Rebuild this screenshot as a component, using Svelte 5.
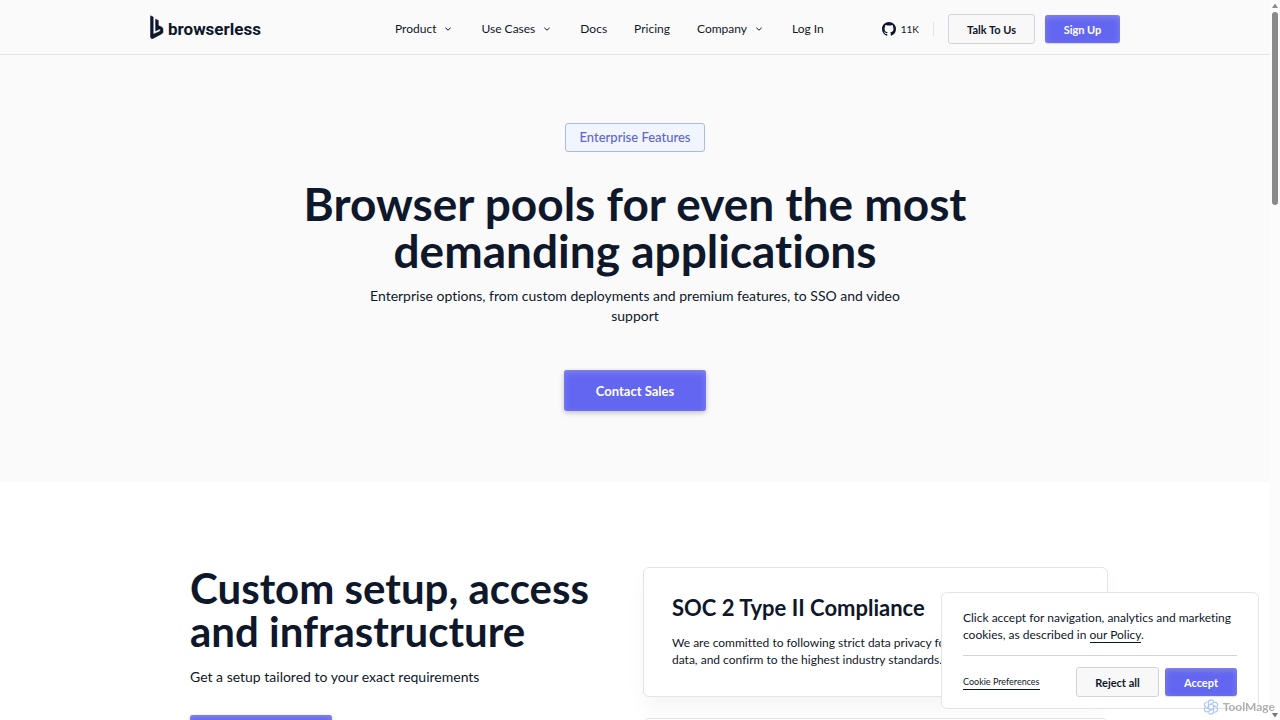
<script>
  const navItems = [
    { label: 'Product', menu: true },
    { label: 'Use Cases', menu: true },
    { label: 'Docs' },
    { label: 'Pricing' },
    { label: 'Company', menu: true },
    { label: 'Log In' }
  ];

  let showCookies = $state(true);
</script>

<div class="window">
  <div class="page">
    <header>
      <div class="bar">
        <a class="logo" href="/" aria-label="browserless home">
          <svg width="14" height="25" viewBox="0 0 14 25" aria-hidden="true">
            <path d="M0.5 0.8 L3.2 2 V19.3 L10.2 16.2 V13.8 L5.6 15.9 V4.2 L8.3 5.4 V10.6 L11.7 12.1 Q13 12.8 13 14.2 V17 Q13 18.2 11.9 18.7 L3 23.4 Q1.6 24 0.9 23 Q0.5 22.4 0.5 21.5 Z" fill="#0f172a" stroke="#0f172a" stroke-width="0.5" stroke-linejoin="round" />
          </svg>
          <span>browserless</span>
        </a>

        <nav>
          {#each navItems as item}
            {#if item.menu}
              <button class="nav-item">
                {item.label}
                <svg width="12" height="12" viewBox="0 0 12 12" aria-hidden="true">
                  <path d="M3.6 5 L6 7.2 L8.4 5" fill="none" stroke="#0f172a" stroke-width="1" stroke-linecap="round" />
                </svg>
              </button>
            {:else}
              <a class="nav-item" href="/{item.label.toLowerCase()}">{item.label}</a>
            {/if}
          {/each}
        </nav>

        <div class="actions">
          <a class="github" href="/github">
            <svg width="14" height="14" viewBox="0 0 16 16" aria-hidden="true">
              <path fill="#0f172a" d="M8 0C3.58 0 0 3.58 0 8c0 3.54 2.29 6.53 5.47 7.59.4.07.55-.17.55-.38 0-.19-.01-.82-.01-1.49-2.01.37-2.53-.49-2.69-.94-.09-.23-.48-.94-.82-1.13-.28-.15-.68-.52-.01-.53.63-.01 1.08.58 1.23.82.72 1.21 1.87.87 2.33.66.07-.52.28-.87.51-1.07-1.78-.2-3.64-.89-3.64-3.95 0-.87.31-1.59.82-2.15-.08-.2-.36-1.02.08-2.12 0 0 .67-.21 2.2.82.64-.18 1.32-.27 2-.27s1.36.09 2 .27c1.53-1.04 2.2-.82 2.2-.82.44 1.1.16 1.92.08 2.12.51.56.82 1.27.82 2.15 0 3.07-1.87 3.75-3.65 3.95.29.25.54.73.54 1.48 0 1.07-.01 1.93-.01 2.2 0 .21.15.46.55.38A8.01 8.01 0 0 0 16 8c0-4.42-3.58-8-8-8z" />
            </svg>
            11K
          </a>
          <button class="btn outline talk">Talk To Us</button>
          <button class="btn primary signup">Sign Up</button>
        </div>
      </div>
    </header>

    <section class="hero">
      <span class="tag">Enterprise Features</span>
      <h1>Browser pools for even the most demanding applications</h1>
      <p>Enterprise options, from custom deployments and premium features, to SSO and video support</p>
      <button class="btn primary large">Contact Sales</button>
    </section>

    <section class="features">
      <div class="intro">
        <h2>Custom setup, access and infrastructure</h2>
        <p>Get a setup tailored to your exact requirements</p>
        <button class="btn primary large" aria-label="Contact Sales"></button>
      </div>
      <div class="cards">
        <article class="card">
          <h3>SOC 2 Type II Compliance</h3>
          <p>We are committed to following strict data privacy for your data, and confirm to the highest industry standards.</p>
        </article>
        <article class="card"></article>
      </div>
    </section>
  </div>

  <div class="scrollbar" aria-hidden="true">
    <svg width="6" height="5" viewBox="0 0 6 5"><path d="M3 0.5 L6 5 H0 Z" fill="#8b8b8b" /></svg>
    <div class="thumb"></div>
    <svg class="down" width="6" height="5" viewBox="0 0 6 5"><path d="M0 0 H6 L3 4.5 Z" fill="#777" /></svg>
  </div>

  {#if showCookies}
    <aside class="cookies">
      <p>Click accept for navigation, analytics and marketing cookies, as described in <a href="/policy">our Policy</a>.</p>
      <div class="choices">
        <a class="prefs" href="/preferences">Cookie Preferences</a>
        <button class="btn outline reject" onclick={() => (showCookies = false)}>Reject all</button>
        <button class="btn primary accept" onclick={() => (showCookies = false)}>Accept</button>
      </div>
    </aside>
  {/if}

  <div class="watermark">
    <svg width="16" height="16" viewBox="0 0 16 16" aria-hidden="true">
      <g fill="none" stroke="#a9c6f5" stroke-width="1.2">
        {#each [0, 60, 120, 180, 240, 300] as angle}
          <path d="M8 5 L5.4 6.5 V3.4 Q5.6 1 8 0.8 Q10 0.8 10.8 2.4" transform="rotate({angle} 8 8)" />
        {/each}
      </g>
    </svg>
    ToolMage
  </div>
</div>

<style>
  :global(body) {
    margin: 0;
    background: #fff;
  }

  .window {
    display: flex;
    height: 100vh;
    overflow: hidden;
    font-family: Lato, "Liberation Sans", sans-serif;
    font-variant-ligatures: no-common-ligatures;
    color: #0f172a;
  }

  .page {
    flex: 1;
    min-width: 0;
  }

  h1, h2, h3, p {
    margin: 0;
  }

  a {
    color: inherit;
    text-decoration: none;
  }

  button {
    font-family: inherit;
    color: inherit;
    cursor: pointer;
  }

  header {
    background: #fafafa;
    border-bottom: 1px solid #e4e4e7;
  }

  .bar {
    display: flex;
    align-items: center;
    max-width: 970px;
    height: 54px;
    padding-top: 4px;
    box-sizing: border-box;
    margin: 0 auto;
  }

  .logo {
    display: flex;
    align-items: center;
    gap: 4px;
    width: 245px;
    font: 700 17px/24px Roboto, sans-serif;
  }

  .logo svg {
    margin-bottom: 4px;
  }

  nav {
    display: flex;
    gap: 27px;
  }

  .nav-item {
    display: flex;
    align-items: center;
    gap: 6px;
    padding: 0;
    border: 0;
    background: none;
    font-size: 12px;
    line-height: 16px;
    white-space: nowrap;
  }

  .actions {
    display: flex;
    align-items: center;
    margin-left: auto;
  }

  .github {
    display: flex;
    align-items: center;
    gap: 5px;
    padding-right: 14px;
    margin-right: 14px;
    border-right: 1px solid #e4e4e7;
    font-size: 10px;
    line-height: 14px;
  }

  .btn {
    box-sizing: border-box;
    height: 28px;
    padding: 0;
    border: 0;
    border-radius: 3px;
    font-size: 11px;
    font-weight: 700;
    white-space: nowrap;
  }

  .primary {
    background: #6366f1;
    color: #fff;
    box-shadow: inset 0 2px 6px rgba(148, 150, 230, 0.7), 0 1px 1px rgba(30, 30, 90, 0.15);
  }

  .outline {
    height: 30px;
    background: #f8f8f9;
    border: 1px solid #d4d4d8;
  }

  .talk {
    width: 87px;
    margin-right: 10px;
  }

  .signup {
    width: 75px;
  }

  .large {
    width: 142px;
    height: 41px;
    font-size: 13px;
    box-shadow: inset 0 2px 6px rgba(148, 150, 230, 0.7), 0 2px 5px rgba(30, 30, 60, 0.25);
  }

  .hero {
    display: flex;
    flex-direction: column;
    align-items: center;
    padding: 68px 20px 71px;
    background: #fafafa;
    text-align: center;
  }

  .tag {
    padding: 5px 14px;
    border: 1px solid #a9bcdc;
    border-radius: 3px;
    background: #f0f5ff;
    color: #6366c8;
    font-size: 13px;
    font-weight: 500;
    line-height: 17px;
  }

  h1 {
    max-width: 700px;
    margin-top: 28px;
    font-size: 46px;
    line-height: 47px;
  }

  .hero p {
    max-width: 560px;
    margin: 12px 0 44px;
    font-size: 14px;
    line-height: 20px;
  }

  .features {
    display: flex;
    justify-content: space-between;
    max-width: 918px;
    padding: 85px 0 0 28px;
    margin: 0 auto;
  }

  .intro {
    width: 430px;
  }

  h2 {
    font-size: 42px;
    line-height: 43px;
  }

  .intro p {
    margin: 14px 0 28px;
    font-size: 14px;
    line-height: 20px;
  }

  .cards {
    display: flex;
    flex-direction: column;
    gap: 21px;
    width: 465px;
  }

  .card {
    box-sizing: border-box;
    min-height: 130px;
    padding: 28px;
    border: 1px solid #e4e4e7;
    border-radius: 6px;
    background: #fff;
    box-shadow: 0 12px 20px rgba(0, 0, 0, 0.04);
  }

  h3 {
    font-size: 22px;
    line-height: 24px;
  }

  .card p {
    max-width: 325px;
    margin-top: 14px;
    font-size: 12px;
    line-height: 17px;
  }

  .scrollbar {
    display: flex;
    flex-direction: column;
    align-items: center;
    width: 10px;
    padding: 3px 0 2px;
    box-sizing: border-box;
    background: #fcfcfc;
  }

  .thumb {
    width: 6px;
    height: 27%;
    margin-top: 4px;
    border-radius: 3px;
    background: #8b8b8b;
  }

  .down {
    margin-top: auto;
  }

  .cookies {
    position: fixed;
    right: 21px;
    bottom: 11px;
    box-sizing: border-box;
    width: 318px;
    padding: 16px 21px 11px;
    border: 1px solid #e4e4e7;
    border-radius: 6px;
    background: #fff;
  }

  .cookies p {
    padding-bottom: 12px;
    border-bottom: 1px solid #d4d4d8;
    font-size: 12px;
    line-height: 17px;
  }

  .cookies p a {
    border-bottom: 1px solid #0f172a;
  }

  .choices {
    display: flex;
    align-items: center;
    gap: 6px;
    padding-top: 11px;
  }

  .prefs {
    margin-right: auto;
    border-bottom: 1px solid #0f172a;
    font-size: 9px;
    line-height: 14px;
  }

  .reject {
    width: 83px;
  }

  .accept {
    width: 72px;
  }

  .watermark {
    position: fixed;
    right: 5px;
    bottom: 5px;
    display: flex;
    align-items: center;
    gap: 4px;
    color: #b0b0b0;
    font-size: 12px;
    font-weight: 700;
    line-height: 16px;
  }
</style>
